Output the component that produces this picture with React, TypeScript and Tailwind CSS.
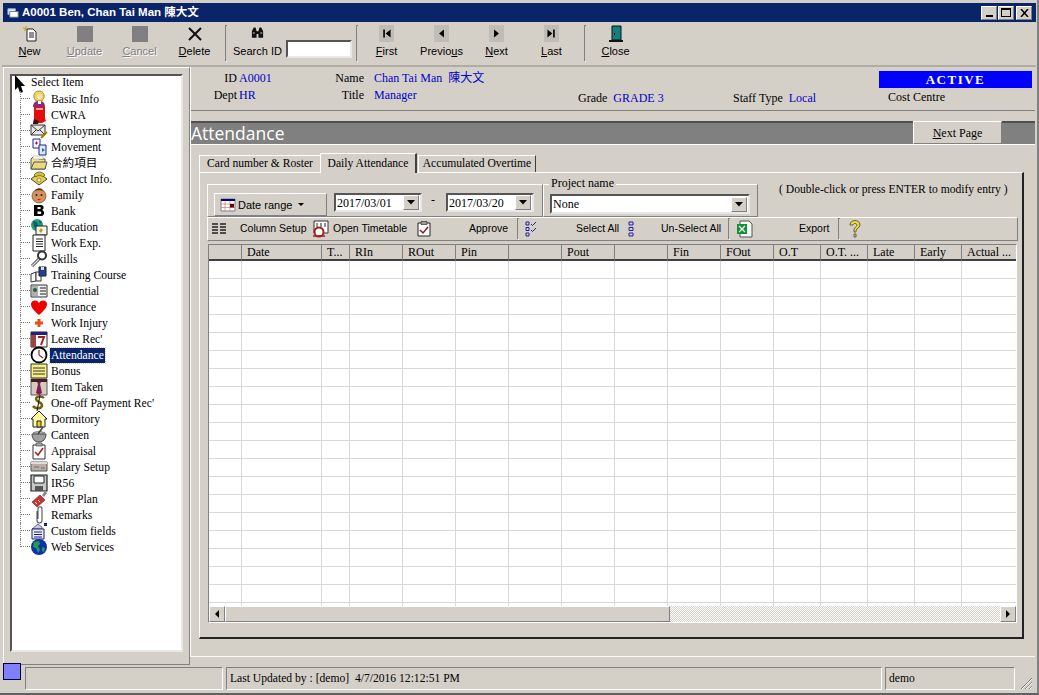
import type { ReactNode } from "react";

const raised = "border border-t-white border-l-white border-r-[#808080] border-b-[#808080]";
const sunken = "border border-t-[#808080] border-l-[#808080] border-r-white border-b-white";
const field = "border-2 border-t-[#555] border-l-[#555] border-r-[#e8e8e8] border-b-[#e8e8e8] bg-white";
const uiFont = "[font-family:Liberation_Sans,sans-serif] text-[11px] text-black";
const serifFont = "[font-family:Liberation_Serif,Noto_Sans_CJK_TC,serif] text-[12px] text-black";
const serifSmall = "[font-family:Liberation_Serif,Noto_Sans_CJK_TC,serif] text-[11.6px] text-black";

function Ico({ children, size = 18 }: { children: ReactNode; size?: number }) {
  return (
    <svg viewBox="0 0 18 18" width={size} height={size} className="shrink-0">
      {children}
    </svg>
  );
}

const treeItems: { label: string; icon: ReactNode; selected?: boolean }[] = [
  {
    label: "Basic Info",
    icon: (
      <Ico>
        <path d="M4 8c-1-5 2-7 5-7s6 2 5 7l-2 3H6z" fill="#f2d840" stroke="#555" strokeWidth=".6" />
        <circle cx="9.500" cy="6.500" r="2.600" fill="#f5e3c0" />
        <path d="M3 17c0-4 2-6 6-6s6 2 6 6z" fill="#8a2a7a" />
        <path d="M8 11h3v3H8z" fill="#fff" />
      </Ico>
    ),
  },
  {
    label: "CWRA",
    icon: (
      <Ico>
        <path d="M4 1h11v11l1 3-4 2H5l-2 1 1-5z" fill="#e01010" />
        <path d="M4 13l-1 5h5l1-3z" fill="#401010" />
        <path d="M6 2h7v2H6z" fill="#f8a0a0" />
      </Ico>
    ),
  },
  {
    label: "Employment",
    icon: (
      <Ico>
        <path d="M1 3h14v10H1z" fill="#e8e8e8" stroke="#333" />
        <path d="M1 3l7 6 7-6M1 13l5-5M15 13l-5-5" fill="none" stroke="#333" />
        <path d="M11 16l6-6" stroke="#a08000" strokeWidth="2" />
      </Ico>
    ),
  },
  {
    label: "Movement",
    icon: (
      <Ico>
        <path d="M3 1h7v9H3z" fill="#fff" stroke="#20209a" />
        <path d="M9 7h7v10H9z" fill="#dfe8ff" stroke="#20209a" />
        <path d="M5 5h3M6.500 3.500v3" stroke="#a000a0" />
        <path d="M12 10l3 2-3 2z" fill="#008080" />
      </Ico>
    ),
  },
  {
    label: "合約項目",
    icon: (
      <Ico>
        <path d="M1 5l2-2h5l1 2h6v10H1z" fill="#f0e090" stroke="#555" />
        <path d="M1 15l3-7h13l-2 7z" fill="#e8d880" stroke="#555" />
        <path d="M3 2h10v3H3z" fill="#fff" stroke="#999" strokeWidth=".5" />
      </Ico>
    ),
  },
  {
    label: "Contact Info.",
    icon: (
      <Ico>
        <path d="M1 9l8-6 8 6-8 6z" fill="#e8d040" stroke="#444" />
        <path d="M4 5c3-4 8-4 11 0l-2 2c-2-2-5-2-7 0z" fill="#d8c030" stroke="#444" strokeWidth=".7" />
        <circle cx="9" cy="10" r="2" fill="#fff4a0" stroke="#555" strokeWidth=".6" />
      </Ico>
    ),
  },
  {
    label: "Family",
    icon: (
      <Ico>
        <circle cx="9" cy="10" r="7" fill="#d89060" stroke="#552" strokeWidth=".7" />
        <path d="M5 5c1-3 7-4 8 0-2-1-6-1-8 0z" fill="#6a3010" />
        <circle cx="6.500" cy="9" r="1" fill="#222" />
        <circle cx="11.500" cy="9" r="1" fill="#222" />
        <path d="M7 13c1 1.500 3 1.500 4 0z" fill="#c02020" />
      </Ico>
    ),
  },
  {
    label: "Bank",
    icon: (
      <Ico>
        <path
          d="M4 3h7c3 0 3.500 4 1 5 3 1 3 6-1 6H4zM7.500 5v2h2.500c1 0 1-2 0-2zM7.500 9.500V12h3c1 0 1-2.500 0-2.500z"
          fill="#000"
          fillRule="evenodd"
        />
      </Ico>
    ),
  },
  {
    label: "Education",
    icon: (
      <Ico>
        <circle cx="7" cy="7" r="6" fill="#20a070" />
        <path d="M3 3l4 1 1 4-4 1zM9 2l3 2-2 2z" fill="#0a5a80" />
        <path d="M6 8h11v9H6z" fill="#f4f4f4" stroke="#222" />
        <path d="M11 10l2 2-2 3-2-2z" fill="#c0a000" />
      </Ico>
    ),
  },
  {
    label: "Work Exp.",
    icon: (
      <Ico>
        <path d="M3 1h12v16H3z" fill="#fff" stroke="#222" />
        <path d="M6 5h7M6 7.500h7M6 10h7M6 12.500h7" stroke="#222" />
      </Ico>
    ),
  },
  {
    label: "Skills",
    icon: (
      <Ico>
        <path d="M2 16l8-8" stroke="#333" strokeWidth="3" />
        <path d="M2 16l8-8" stroke="#ddd" strokeWidth="1.400" />
        <circle cx="12" cy="5.500" r="4" fill="none" stroke="#333" strokeWidth="2" />
      </Ico>
    ),
  },
  {
    label: "Training Course",
    icon: (
      <Ico>
        <path d="M1 8l5-2v9l-5 1z" fill="#fff" stroke="#333" />
        <path d="M6 6h5v9H6z" fill="#fff" stroke="#333" />
        <path d="M9 1h7v9H9z" fill="#204090" stroke="#222" />
        <path d="M11 1h3v3h-3z" fill="#ddd" />
      </Ico>
    ),
  },
  {
    label: "Credential",
    icon: (
      <Ico>
        <path d="M1 3h16v12H1z" fill="#f0f0f0" stroke="#333" />
        <path d="M2 4h6v10H2z" fill="#b0b0b0" />
        <circle cx="5" cy="8" r="2" fill="#206040" />
        <path d="M10 6h6M10 9h6M10 12h6" stroke="#222" />
      </Ico>
    ),
  },
  {
    label: "Insurance",
    icon: (
      <Ico>
        <path d="M9 17C3 12 1 9 1 6c0-4 6-5 8-1 2-4 8-3 8 1 0 3-2 6-8 11z" fill="#f00000" />
      </Ico>
    ),
  },
  {
    label: "Work Injury",
    icon: (
      <Ico>
        <path d="M7.500 5h3v2.500H13v3h-2.500V13h-3v-2.500H5v-3h2.500z" fill="#e85010" />
      </Ico>
    ),
  },
  {
    label: "Leave Rec'",
    icon: (
      <Ico>
        <path d="M1 2h16v15H1z" fill="#fff" stroke="#222" />
        <path d="M1 2h16v3H1z" fill="#202080" />
        <path d="M1 5h5v12H1z" fill="#a04040" />
        <path d="M8 7h6l-3 8" fill="none" stroke="#a02020" strokeWidth="2" />
      </Ico>
    ),
  },
  {
    label: "Attendance",
    selected: true,
    icon: (
      <Ico>
        <circle cx="9" cy="9" r="7.500" fill="#fff" stroke="#000" strokeWidth="1.800" />
        <path d="M9 9V4M9 9l4 3" stroke="#a02020" strokeWidth="1.200" />
      </Ico>
    ),
  },
  {
    label: "Bonus",
    icon: (
      <Ico>
        <path d="M1 2h16v14H1z" fill="#f8f080" stroke="#333" />
        <path d="M3 6h12M3 9h12M3 12h12" stroke="#333" />
      </Ico>
    ),
  },
  {
    label: "Item Taken",
    icon: (
      <Ico>
        <path d="M1 1h16v16H1z" fill="#d8c8c0" stroke="#555" />
        <path d="M1 1h16v3H1z" fill="#402020" />
        <path d="M7 4h4l-1 2 2 9-3 2-3-2 2-9z" fill="#802050" />
      </Ico>
    ),
  },
  {
    label: "One-off Payment Rec'",
    icon: (
      <Ico>
        <path d="M14 4c-2-2-8-2-8 1s7 3 6 7c-1 3-7 3-9 0" fill="none" stroke="#706010" strokeWidth="2.400" />
        <path d="M10 1L7 17" stroke="#302000" strokeWidth="1.200" />
      </Ico>
    ),
  },
  {
    label: "Dormitory",
    icon: (
      <Ico>
        <path d="M9 1L1 9h2v8h12V9h2z" fill="#fff8a0" stroke="#222" />
        <path d="M7 11h4v6H7z" fill="#e8d020" stroke="#222" />
      </Ico>
    ),
  },
  {
    label: "Canteen",
    icon: (
      <Ico>
        <path d="M2 8h14c0 5-3 8-7 8s-7-3-7-8z" fill="#a0a0a0" stroke="#444" />
        <path d="M3 7c3-2 9-2 12 0z" fill="#e8e8e8" stroke="#444" strokeWidth=".6" />
        <path d="M8 8l5-7" stroke="#444" strokeWidth="1.500" />
      </Ico>
    ),
  },
  {
    label: "Appraisal",
    icon: (
      <Ico>
        <path d="M3 3h12v14H3z" fill="#fff" stroke="#333" />
        <path d="M6 1h6v3H6z" fill="#aaa" stroke="#333" strokeWidth=".6" />
        <path d="M5 10l3 3 5-7" fill="none" stroke="#a02020" strokeWidth="1.500" />
      </Ico>
    ),
  },
  {
    label: "Salary Setup",
    icon: (
      <Ico>
        <path d="M1 4h16v9H1z" fill="#b8b0a8" stroke="#555" />
        <path d="M1 4h16v2H1z" fill="#e0dcd8" />
        <path d="M4 9h5M11 10h4" stroke="#806060" />
      </Ico>
    ),
  },
  {
    label: "IR56",
    icon: (
      <Ico>
        <path d="M1 1h16v16H1z" fill="#c8c8c8" stroke="#222" strokeWidth="1.200" />
        <path d="M4 2h10v7H4z" fill="#fff" stroke="#222" />
        <path d="M5 12h8v5H5z" fill="#555" />
      </Ico>
    ),
  },
  {
    label: "MPF Plan",
    icon: (
      <Ico>
        <path d="M2 12l8-7 5 5-8 7z" fill="#d03030" stroke="#602020" strokeWidth=".6" />
        <path d="M8 10l2 2M5 12l2 2" stroke="#fff" />
        <path d="M12 5l3-4 2 2-3 4z" fill="#888" />
      </Ico>
    ),
  },
  {
    label: "Remarks",
    icon: (
      <Ico>
        <path d="M7 5v9c0 4 5 4 5 0V3c0-3-4-3-4 0v10" fill="none" stroke="#555" strokeWidth="1.100" />
      </Ico>
    ),
  },
  {
    label: "Custom fields",
    icon: (
      <Ico>
        <path d="M2 7l6-5 4 3v2z" fill="#c0c8f0" stroke="#222" strokeWidth=".6" />
        <path d="M2 7h12v10H2z" fill="#e8ecff" stroke="#202060" />
        <path d="M4 10h8M4 12.500h8M4 15h8" stroke="#202080" />
        <path d="M14 1h3v3h-3z" fill="#202080" />
      </Ico>
    ),
  },
  {
    label: "Web Services",
    icon: (
      <Ico>
        <circle cx="9" cy="9" r="8" fill="#1030b0" />
        <path d="M4 4l5-1 1 3-2 2 2 4-2 3-2-5-3-1zM12 9l3 1-1 4-2-1z" fill="#20a040" />
      </Ico>
    ),
  },
];

const toolButtons = [
  { pre: "", key: "N", post: "ew", icon: "new" },
  { pre: "", key: "U", post: "pdate", icon: "off", disabled: true },
  { pre: "", key: "C", post: "ancel", icon: "off", disabled: true },
  { pre: "", key: "D", post: "elete", icon: "del" },
];

const navButtons = [
  { key: "F", post: "irst", pre: "", icon: "M4 3h2v10H4zM13 3v10L7 8z" },
  { key: "u", post: "s", pre: "Previo", icon: "M11 3v10L5 8z" },
  { key: "N", post: "ext", pre: "", icon: "M5 3v10l6-5z" },
  { key: "L", post: "ast", pre: "", icon: "M3 3v10l6-5zM10 3h2v10h-2z" },
];

const columns = ["", "Date", "T...", "RIn", "ROut", "Pin", "", "Pout", "", "Fin", "FOut", "O.T", "O.T. ...", "Late", "Early", "Actual ..."];

function ToolIcon({ kind }: { kind: string }) {
  if (kind === "off") return <div className="h-[16px] w-[16px] bg-[#808080]" />;
  if (kind === "del")
    return (
      <svg viewBox="0 0 16 16" width="16" height="16">
        <path d="M2 2l12 12M14 2L2 14" stroke="#111" strokeWidth="2" />
      </svg>
    );
  return (
    <svg viewBox="0 0 16 16" width="16" height="16">
      <path d="M5 3h6l3 3v9H5z" fill="#fff" stroke="#222" />
      <path d="M7 7h5M7 9h5M7 11h5" stroke="#222" />
      <path d="M1 2l3 1M4 0l0 3M2 5l2-2" stroke="#c8a000" />
    </svg>
  );
}

function ToolButton({ pre, hot, post, disabled, icon }: { pre: string; hot: string; post: string; disabled?: boolean; icon: ReactNode }) {
  return (
    <div className={`flex w-[55px] shrink-0 flex-col items-center pt-[3px] ${uiFont}`}>
      <div className="flex h-[17px] items-center justify-center">{icon}</div>
      <span className={`mt-[1px] leading-[16px] ${disabled ? "text-[#808080] [text-shadow:1px_1px_0_#fff]" : ""}`}>
        {pre}
        <u>{hot}</u>
        {post}
      </span>
    </div>
  );
}

function DropButton() {
  return (
    <div className={`flex h-[15px] w-[16px] shrink-0 items-center justify-center bg-[#d4d0c8] ${raised}`}>
      <svg viewBox="0 0 8 5" width="8" height="5">
        <path d="M0 0h8L4 4.500z" fill="#000" />
      </svg>
    </div>
  );
}

function DateBox({ value }: { value: string }) {
  return (
    <div className={`flex h-[19px] w-[88px] items-center justify-between pl-[1px] pr-[1px] ${field}`}>
      <span className="leading-none">{value}</span>
      <DropButton />
    </div>
  );
}

function TreePanel() {
  return (
    <div className={`w-[187px] shrink-0 px-[6px] pb-[12px] pt-[6px] ${raised} border-l-[#d4d0c8] border-t-[#d4d0c8]`}>
      <div className={`h-[578px] border-2 border-t-[#555] border-l-[#555] border-r-[#e8e8e8] border-b-[#e8e8e8] bg-white ${serifSmall}`}>
        <div className="flex h-[15px] items-center pl-[2px]">
          <svg viewBox="0 0 12 18" width="12" height="18" className="shrink-0">
            <path d="M1 0v15l3-3 2 6 3-1-2-6h4z" fill="#000" />
          </svg>
          <span className="-mt-px ml-[5px] leading-none">Select Item</span>
        </div>
        {treeItems.map((item, i) => (
          <div key={item.label} className="ml-[8px] flex h-[16px] items-center">
            <div className={`w-[10px] shrink-0 self-start border-l border-dotted border-l-[#808080] ${i === treeItems.length - 1 ? "h-[8px]" : "h-[16px]"}`}>
              <div className="h-[8px] border-b border-dotted border-b-[#808080]" />
            </div>
            <div className="flex w-[17px] shrink-0 justify-center">{item.icon}</div>
            <span
              className={`ml-[3px] whitespace-nowrap px-[1px] leading-[15px] ${item.selected ? "bg-[#0a246a] text-white outline-1 outline-dotted outline-[#d4d0c8]" : ""}`}
            >
              {item.label}
            </span>
          </div>
        ))}
      </div>
    </div>
  );
}

function InfoBar() {
  const blue = "text-[#0000c8]";
  return (
    <div className={`flex h-[44px] shrink-0 border-b border-b-[#808080] pt-[3px] leading-[17px] ${serifFont}`}>
      <div className="w-[46px] text-right">
        <div>ID</div>
        <div>Dept</div>
      </div>
      <div className={`ml-[2px] w-[85px] ${blue}`}>
        <div>A0001</div>
        <div>HR</div>
      </div>
      <div className="w-[40px] text-right">
        <div>Name</div>
        <div>Title</div>
      </div>
      <div className={`ml-[10px] w-[204px] ${blue}`}>
        <div>Chan Tai Man&nbsp; 陳大文</div>
        <div>Manager</div>
      </div>
      <div className="flex w-[155px] items-end pb-[3px]">
        <span>Grade</span>
        <span className={`ml-[6px] ${blue}`}>GRADE 3</span>
      </div>
      <div className="flex w-[146px] items-end pb-[3px]">
        <span>Staff Type</span>
        <span className={`ml-[6px] ${blue}`}>Local</span>
      </div>
      <div className="flex w-[153px] flex-col">
        <div className="mt-[1px] flex h-[17px] items-center justify-center bg-[#0000ff] text-[13px] font-bold tracking-[1.500px] text-white">ACTIVE</div>
        <div className="ml-[9px] mt-[1px]">Cost Centre</div>
      </div>
    </div>
  );
}

function FilterRow() {
  return (
    <div className={`flex h-[33px] items-stretch ${serifFont}`}>
      <div className={`flex w-[336px] shrink-0 items-start ${raised} border-t-[#808080] pl-[6px] pt-[8px]`}>
        <div className={`flex h-[23px] w-[113px] items-center pl-[5px] ${uiFont} ${raised}`}>
          <svg viewBox="0 0 16 16" width="16" height="16" className="shrink-0">
            <path d="M1 2h14v12H1z" fill="#fff" stroke="#808080" />
            <path d="M1 2h14v2H1z" fill="#000080" />
            <path d="M1 7h14M1 10.500h14M5 4v10M10 4v10" stroke="#c08080" strokeWidth=".7" />
            <path d="M10 7h4v3.500h-4z" fill="#600000" />
          </svg>
          <span className="ml-[2px] mt-[1px]">Date range</span>
          <svg viewBox="0 0 6 4" width="6" height="4" className="ml-[6px]">
            <path d="M0 0h6L3 3z" fill="#000" />
          </svg>
        </div>
        <div className="ml-[7px]">
          <DateBox value="2017/03/01" />
        </div>
        <span className="ml-[9px] leading-[14px]">-</span>
        <div className="ml-[11px]">
          <DateBox value="2017/03/20" />
        </div>
      </div>
      <div className={`relative w-[215px] shrink-0 ${raised} border-t-[#808080] pl-[6px] pt-[9px]`}>
        <span className="absolute left-[5px] top-[-9px] bg-[#d4d0c8] px-[2px] leading-[14px]">Project name</span>
        <div className={`flex h-[20px] w-[200px] items-center justify-between pl-[1px] pr-[1px] ${field}`}>
          <span className="leading-none">None</span>
          <DropButton />
        </div>
      </div>
      <div className="-mt-px ml-[21px] whitespace-nowrap text-[11.6px] leading-[14px]">( Double-click or press ENTER to modify entry )</div>
    </div>
  );
}

function GridBar() {
  return (
    <div className={`flex h-[24px] w-[811px] items-center whitespace-nowrap ${raised} [font-family:Liberation_Sans,sans-serif] text-[10.5px] text-black`}>
      <svg viewBox="0 0 14 12" width="14" height="12" className="ml-[4px] shrink-0">
        <path d="M0 1h6M8 1h6M0 4h6M8 4h6M0 7h6M8 7h6M0 10h6M8 10h6" stroke="#222" strokeWidth="1.500" />
      </svg>
      <span className="ml-[14px] w-[65px]">Column Setup</span>
      <svg viewBox="0 0 18 18" width="18" height="18" className="ml-[7px] shrink-0">
        <path d="M2 1h14v12H2z" fill="#fff" stroke="#333" />
        <path d="M5 3v4M9 3v4M13 3v4" stroke="#222" />
        <circle cx="7" cy="12" r="4.500" fill="#fff" stroke="#a02020" strokeWidth="2" />
        <path d="M1 16h12" stroke="#a02020" strokeWidth="1.500" />
      </svg>
      <span className="ml-[3px] w-[75px]">Open Timetable</span>
      <svg viewBox="0 0 14 16" width="14" height="16" className="ml-[9px] shrink-0">
        <path d="M1 2h12v13H1z" fill="#fff" stroke="#222" />
        <path d="M4 0.500h6v3H4z" fill="#999" stroke="#222" strokeWidth=".6" />
        <path d="M3 9l3 3 5-6" fill="none" stroke="#802020" strokeWidth="1.500" />
      </svg>
      <span className="ml-[38px] w-[41px]">Approve</span>
      <div className={`ml-[7px] h-[22px] w-[2px] ${sunken} border-r-0`} />
      <svg viewBox="0 0 12 16" width="12" height="16" className="ml-[6px] shrink-0">
        <path d="M1 1h3v3H1zM1 6.500h3v3H1zM1 12h3v3H1z" fill="none" stroke="#2020a0" />
        <path d="M6 3l1.500 1.500L11 1M6 9l1.500 1.500L11 7" fill="none" stroke="#2020a0" />
      </svg>
      <span className="ml-[39px] w-[44px]">Select All</span>
      <svg viewBox="0 0 6 16" width="6" height="16" className="ml-[8px] shrink-0">
        <path d="M1 1h4v3H1zM1 6.500h4v3H1zM1 12h4v3H1z" fill="none" stroke="#2020a0" />
      </svg>
      <span className="ml-[27px] w-[60px]">Un-Select All</span>
      <div className={`ml-[7px] h-[22px] w-[2px] ${sunken} border-r-0`} />
      <svg viewBox="0 0 18 18" width="18" height="18" className="ml-[6px] shrink-0">
        <path d="M4 1h9l3 3v13H4z" fill="#f4f8f4" stroke="#555" />
        <path d="M1 4h10v10H1z" fill="#109030" />
        <path d="M3 6l6 6M9 6l-6 6" stroke="#fff" strokeWidth="1.300" />
      </svg>
      <span className="ml-[45px] w-[32px]">Export</span>
      <div className={`ml-[7px] h-[22px] w-[2px] ${sunken} border-r-0`} />
      <svg viewBox="0 0 14 18" width="14" height="18" className="ml-[8px] shrink-0">
        <path d="M2 5c0-6 10-6 10 0 0 3-4 3-4 6v1H6v-2c0-3 3-3 3-5s-4-2-4 0z" fill="#f0e020" stroke="#444" strokeWidth=".8" />
        <path d="M6 14h2v3H6z" fill="#f0e020" stroke="#444" strokeWidth=".8" />
      </svg>
    </div>
  );
}

function DataGrid() {
  return (
    <div className="ml-[1px] mt-[3px] h-[379px] w-[809px] overflow-hidden border border-t-[#808080] border-l-[#808080] border-r-white border-b-white bg-white">
      <div className="h-[361px] overflow-hidden">
        <div className={`grid w-[808px] grid-cols-[33px_80px_28px_repeat(8,53px)_repeat(4,47px)_55px] grid-rows-[16px] auto-rows-[18px] ${serifFont}`}>
          {columns.map((name, i) => (
            <div
              key={i}
              className="flex h-[16px] items-center whitespace-nowrap border-r border-b-2 border-r-[#808080] border-b-[#404040] bg-[#d4d0c8] pl-[5px] leading-none"
            >
              {name}
            </div>
          ))}
          {Array.from({ length: 320 }, (_, i) => (
            <div key={i} className="border-r border-b border-[#d8d8d8] bg-white" />
          ))}
        </div>
      </div>
      <div className="flex h-[16px] items-stretch bg-[#d4d0c8]">
        <div className={`flex w-[16px] items-center justify-center ${raised}`}>
          <svg viewBox="0 0 4 8" width="4" height="8">
            <path d="M4 0v8L0 4z" fill="#000" />
          </svg>
        </div>
        <div className={`w-[445px] ${raised}`} />
        <div className="flex-1 bg-[repeating-conic-gradient(#d4d0c8_0_25%,#ffffff_0_50%)] bg-[length:2px_2px]" />
        <div className={`flex w-[16px] items-center justify-center ${raised}`}>
          <svg viewBox="0 0 4 8" width="4" height="8">
            <path d="M0 0v8l4-4z" fill="#000" />
          </svg>
        </div>
      </div>
    </div>
  );
}

function TabPanel() {
  const tab = "flex h-[17px] items-center justify-center whitespace-nowrap border-t border-l border-t-white border-l-white text-[11.6px]";
  return (
    <div className={`ml-[8px] mt-[8px] w-[825px] ${serifFont}`}>
      <div className="flex h-[19px] items-end">
        <div className={`${tab} w-[121px]`}>Card number &amp; Roster</div>
        <div className="relative z-10 -mb-px flex h-[20px] w-[97px] items-center justify-center whitespace-nowrap border-t border-l border-r-2 border-t-white border-l-white border-r-[#404040] bg-[#d4d0c8] text-[11.6px]">
          Daily Attendance
        </div>
        <div className={`${tab} ml-[1px] w-[118px] border-r border-r-[#404040]`}>Accumulated Overtime</div>
      </div>
      <div className="h-[467px] border-t border-l border-r-2 border-b-2 border-t-white border-l-white border-r-[#222] border-b-[#222] pl-[7px] pt-[11px]">
        <FilterRow />
        <GridBar />
        <DataGrid />
      </div>
    </div>
  );
}

function StatusBar() {
  return (
    <div className="flex h-[28px] shrink-0 items-start">
      <div className="mt-[-1px] h-[17px] w-[18px] shrink-0 border border-[#000040] bg-[#8080ff]" />
      <div className={`ml-[4px] mt-[3px] h-[23px] w-[198px] shrink-0 ${sunken}`} />
      <div className={`ml-[3px] mt-[3px] flex h-[23px] w-[656px] shrink-0 items-center pl-[3px] ${serifSmall} ${sunken}`}>
        Last Updated by : [demo]&nbsp; 4/7/2016 12:12:51 PM
      </div>
      <div className={`ml-[3px] mt-[3px] flex h-[23px] w-[130px] shrink-0 items-center pl-[3px] ${serifSmall} ${sunken}`}>
        demo
      </div>
      <svg viewBox="0 0 14 14" width="14" height="14" className="ml-[4px] mt-[12px] shrink-0">
        <path d="M13 2L2 13M13 6l-7 7M13 10l-3 3" stroke="#808080" />
        <path d="M13 3L3 13M13 7l-6 6M13 11l-2 2" stroke="#fff" />
      </svg>
    </div>
  );
}

export default function App() {
  return (
    <div className="flex h-[695px] w-[1039px] flex-col overflow-hidden border-r-2 border-b-2 border-r-[#808080] border-b-[#606060] bg-[#d4d0c8] pl-[3px] pr-[1px] pt-[3px]">
      <div className="flex h-[19px] shrink-0 items-center bg-[#0a246a] pl-[3px] pr-[4px]">
        <svg viewBox="0 0 16 16" width="15" height="15" className="shrink-0">
          <path d="M2 4h8v6H2z" fill="#dfe8f4" stroke="#9ab" />
          <path d="M4 7h9v6H4z" fill="#fff" stroke="#678" />
        </svg>
        <span className="ml-[1px] [font-family:Liberation_Sans,Noto_Sans_CJK_TC,sans-serif] text-[11.5px] font-bold text-white">A0001 Ben, Chan Tai Man 陳大文</span>
        <div className="ml-auto flex items-center">
          {["min", "max", "close"].map((b) => (
            <div key={b} className={`ml-[1px] flex h-[14px] w-[16px] items-center justify-center bg-[#d4d0c8] ${raised} ${b === "close" ? "ml-[2px]" : ""}`}>
              {b === "min" && <div className="mt-[7px] h-[2px] w-[7px] bg-black" />}
              {b === "max" && <div className="h-[9px] w-[10px] border border-t-2 border-black" />}
              {b === "close" && (
                <svg viewBox="0 0 9 8" width="9" height="8">
                  <path d="M1 0l7 8M8 0L1 8" stroke="#000" strokeWidth="1.500" />
                </svg>
              )}
            </div>
          ))}
        </div>
      </div>

      <div className="-ml-px flex h-[45px] shrink-0 items-start border-b-2 border-b-[#b0aca4]">
        {toolButtons.map((b) => (
          <ToolButton key={b.post} pre={b.pre} hot={b.key} post={b.post} disabled={b.disabled} icon={<ToolIcon kind={b.icon} />} />
        ))}
        <div className={`ml-[3px] mt-[3px] h-[37px] w-[2px] shrink-0 ${sunken} border-r-0`} />
        <div className={`ml-[3px] flex w-[123px] shrink-0 items-start pt-[3px] ${uiFont}`}>
          <div className="flex w-[55px] flex-col items-center">
            <svg viewBox="0 0 16 16" width="15" height="16">
              <path d="M2 6l2-4h2l1 4v7H2zM9 6l1-4h2l2 4v7H9zM7 6h2v3H7z" fill="#111" />
              <path d="M3 7h2v2H3zM11 7h2v2h-2z" fill="#777" />
            </svg>
            <span className="mt-[2px] whitespace-nowrap leading-[16px]">Search ID</span>
          </div>
          <div className={`ml-[1px] mt-[15px] h-[18px] w-[66px] shrink-0 ${field}`} />
        </div>
        <div className={`ml-[3px] mt-[3px] h-[37px] w-[2px] shrink-0 ${sunken} border-r-0`} />
        <div className="ml-[1px] flex shrink-0">
          {navButtons.map((b) => (
            <ToolButton
              key={b.pre + b.post}
              pre={b.pre}
              hot={b.key}
              post={b.post}
              icon={
                <div className="flex h-[17px] w-[15px] items-center justify-center bg-[#c0bcb6]">
                  <svg viewBox="0 0 16 16" width="13" height="13">
                    <path d={b.icon} fill="#000" />
                  </svg>
                </div>
              }
            />
          ))}
        </div>
        <div className={`ml-[5px] mr-[2px] mt-[3px] h-[37px] w-[2px] shrink-0 ${sunken} border-r-0`} />
        <ToolButton
          pre=""
          hot="C"
          post="lose"
          icon={
            <svg viewBox="0 0 18 18" width="18" height="18">
              <path d="M5 1h9v14H5z" fill="#108080" stroke="#111" />
              <path d="M7 8h1v2H7z" fill="#000" />
              <path d="M2 16h14" stroke="#111" strokeWidth="2" />
            </svg>
          }
        />
      </div>

      <div className="flex h-[597px] shrink-0 items-start">
        <TreePanel />
        <div className="h-[590px] w-[845px] shrink-0 border-l border-b border-l-white border-b-[#fafafa]">
          <InfoBar />
          <div className="mt-[10px] flex h-[24px] items-start border-t-2 border-b border-t-[#505050] border-b-white bg-[#808080] pr-[33px]">
            <span className="[font-family:Open_Sans,Noto_Sans,sans-serif] text-[17.500px] leading-[21px] text-white">Attendance</span>
            <div className={`ml-auto -mt-[2px] flex h-[23px] w-[89px] items-center justify-center bg-[#d4d0c8] ${serifFont} ${raised}`}>
              <span>
                <u>N</u>ext Page
              </span>
            </div>
          </div>
          <TabPanel />
        </div>
      </div>

      <StatusBar />
    </div>
  );
}
